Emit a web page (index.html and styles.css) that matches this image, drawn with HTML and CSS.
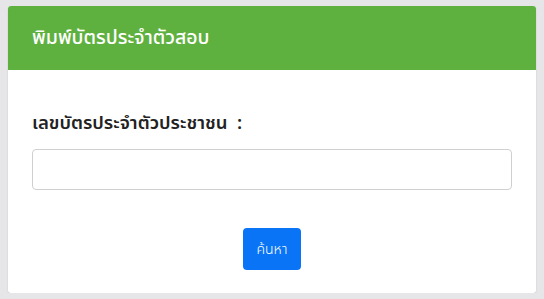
FILE: index.html
```html
<!DOCTYPE html>
<html lang="th">
<head>
<meta charset="utf-8">
<link rel="stylesheet" href="styles.css">
</head>
<body>
<div class="card">
  <div class="card-header">พิมพ์บัตรประจำตัวสอบ</div>
  <div class="card-body">
    <label class="label" for="cid">เลขบัตรประจำตัวประชาชน&nbsp;&nbsp;:</label>
    <input class="input" id="cid" type="text">
    <div class="actions">
      <button class="btn" type="button">ค้นหา</button>
    </div>
  </div>
</div>
</body>
</html>
```
FILE: styles.css
```css
html, body {
  margin: 0;
  padding: 0;
}
body {
  background: #e6e6e8;
  font-family: "Noto Sans Thai", "Noto Sans", "DejaVu Sans", sans-serif;
  padding: 6px 8px 0 8px;
}
.card {
  background: #ffffff;
  border-radius: 3px;
  overflow: hidden;
  box-shadow: 0 1px 2px rgba(0,0,0,0.12);
  height: 287px;
  display: flex;
  flex-direction: column;
}
.card-header {
  background: #5fb13f;
  color: #ffffff;
  height: 64px;
  box-sizing: border-box;
  padding: 0 24px;
  display: flex;
  align-items: center;
  font-size: 19.5px;
  font-weight: 500;
}
.card-body {
  padding: 40px 24px 0 24px;
  display: flex;
  flex-direction: column;
}
.label {
  font-size: 18.5px;
  font-weight: 600;
  color: #222;
  line-height: 26px;
}
.input {
  margin-top: 13px;
  height: 41px;
  box-sizing: border-box;
  border: 1px solid #cfcfcf;
  border-radius: 4px;
  font-size: 16px;
  padding: 6px 12px;
  outline: none;
}
.actions {
  display: flex;
  justify-content: center;
  margin-top: 38px;
}
.btn {
  width: 58px;
  height: 42px;
  background: #0a74f6;
  color: #ffffff;
  border: none;
  border-radius: 4px;
  font-family: inherit;
  font-size: 14px;
  font-weight: 300;
  padding: 0;
}
```
